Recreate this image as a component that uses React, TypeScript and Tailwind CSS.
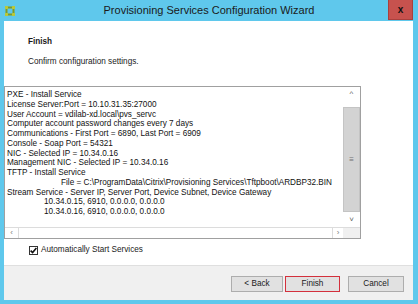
const settingsLines: { text: string; indent?: number }[] = [
  { text: "PXE - Install Service" },
  { text: "License Server:Port = 10.10.31.35:27000" },
  { text: "User Account = vdilab-xd.local\\pvs_servc" },
  { text: "Computer account password changes every 7 days" },
  { text: "Communications - First Port = 6890, Last Port = 6909" },
  { text: "Console - Soap Port = 54321" },
  { text: "NIC - Selected IP = 10.34.0.16" },
  { text: "Management NIC - Selected IP = 10.34.0.16" },
  { text: "TFTP - Install Service" },
  { text: "File = C:\\ProgramData\\Citrix\\Provisioning Services\\Tftpboot\\ARDBP32.BIN", indent: 54 },
  { text: "Stream Service - Server IP, Server Port, Device Subnet, Device Gateway" },
  { text: "10.34.0.15, 6910, 0.0.0.0, 0.0.0.0", indent: 37 },
  { text: "10.34.0.16, 6910, 0.0.0.0, 0.0.0.0", indent: 37 },
]

function AppIcon() {
  return (
    <svg width="10" height="10" viewBox="0 0 10 10">
      <rect x="1.5" y="1.5" width="7" height="7" fill="none" stroke="#7d9a2a" strokeWidth="2" />
      <rect x="0" y="0" width="3" height="3" fill="#b8c83a" />
      <rect x="7" y="0" width="3" height="3" fill="#b8c83a" />
      <rect x="0" y="7" width="3" height="3" fill="#b8c83a" />
      <rect x="7" y="7" width="3" height="3" fill="#b8c83a" />
    </svg>
  )
}

function WizardButton({ label, className }: { label: string; className: string }) {
  return (
    <button
      type="button"
      className={`flex h-[16px] items-center justify-center border bg-[#e1e1e1] text-[8.2px] text-[#1a1a1a] ${className}`}
    >
      {label}
    </button>
  )
}

export default function App() {
  return (
    <div
      className="flex h-[304px] w-[418px] flex-col bg-[#5fc8ec]"
      style={{ fontFamily: '"Liberation Sans", Arial, sans-serif' }}
    >
      {/* title bar */}
      <div className="relative flex h-[21px] shrink-0 items-center">
        <div className="ml-[5px] flex items-center">
          <AppIcon />
        </div>
        <div className="absolute inset-x-0 top-0 flex h-[20px] items-center justify-center text-[11px] text-[#1a1a1a]">
          Provisioning Services Configuration Wizard
        </div>
        <div className="absolute right-[5px] top-0 flex h-[20px] w-[25px] items-center justify-center border border-t-0 border-[#a9403d] bg-[#c7524e] text-[10px] font-bold text-[#111]">
          x
        </div>
      </div>

      {/* body */}
      <div className="mb-[4px] ml-[4px] mr-[5px] flex flex-1 flex-col bg-white">
        <div className="flex flex-1 flex-col">
          <div className="pl-[24px] pt-[16px] text-[8.2px] text-[#1a1a1a]">
            <div className="font-bold leading-[10px]">Finish</div>
            <div className="mt-[10px] leading-[10px]">Confirm configuration settings.</div>
          </div>

          {/* settings list box */}
          <div className="mt-[19px] flex h-[153px] w-[357px] flex-col border border-[#a0a0a0]">
            <div className="flex min-h-0 flex-1">
              <div className="flex-1 overflow-hidden pl-[2px] pt-[3px] text-[8.2px] leading-[9.75px] text-[#111]">
                {settingsLines.map((line, i) => (
                  <div key={i} className="whitespace-nowrap" style={{ paddingLeft: line.indent ?? 0 }}>
                    {line.text}
                  </div>
                ))}
              </div>
              <div className="flex w-[17px] flex-col bg-[#f0f0f0]">
                <div className="flex h-[14px] items-center justify-center bg-white text-[8px] text-[#606060]">
                  ^
                </div>
                <div className="h-[6px] bg-white" />
                <div className="flex flex-1 items-center justify-center border border-[#c4c4c4] bg-[#d3d3d3] text-[8px] leading-none text-[#707070]">
                  ≡
                </div>
                <div className="flex h-[15px] items-center justify-center bg-white text-[8px] text-[#606060]">
                  ˅
                </div>
              </div>
            </div>
            <div className="flex h-[11px] shrink-0 border-t border-[#dcdcdc]">
              <div className="flex w-[13px] items-center justify-center text-[8px] text-[#808080]">‹</div>
              <div className="flex-1 border-l border-r border-[#dcdcdc] bg-white" />
              <div className="flex w-[10px] items-center justify-center text-[8px] text-[#808080]">›</div>
              <div className="w-[17px] bg-[#f0f0f0]" />
            </div>
          </div>

          <label className="ml-[25px] mt-[5px] flex h-[13px] items-center gap-[3px] text-[8.2px] text-[#1a1a1a]">
            <span className="flex h-[9px] w-[9px] items-center justify-center border border-[#333] bg-white">
              <svg width="7" height="7" viewBox="0 0 7 7">
                <path d="M0.6 3.6 L2.6 5.6 L6.4 1" fill="none" stroke="#111" strokeWidth="1.6" />
              </svg>
            </span>
            Automatically Start Services
          </label>
        </div>

        {/* footer */}
        <div className="flex h-[35px] shrink-0 items-start justify-end border-t border-[#dfdfdf] bg-[#f0f0f0] pr-[9px] pt-[10px]">
          <WizardButton label="< Back" className="w-[52px] border-[#adadad]" />
          <WizardButton label="Finish" className="ml-[2px] w-[55px] border-[#d3303c]" />
          <WizardButton label="Cancel" className="ml-[8px] w-[56px] border-[#adadad]" />
        </div>
      </div>
    </div>
  )
}
